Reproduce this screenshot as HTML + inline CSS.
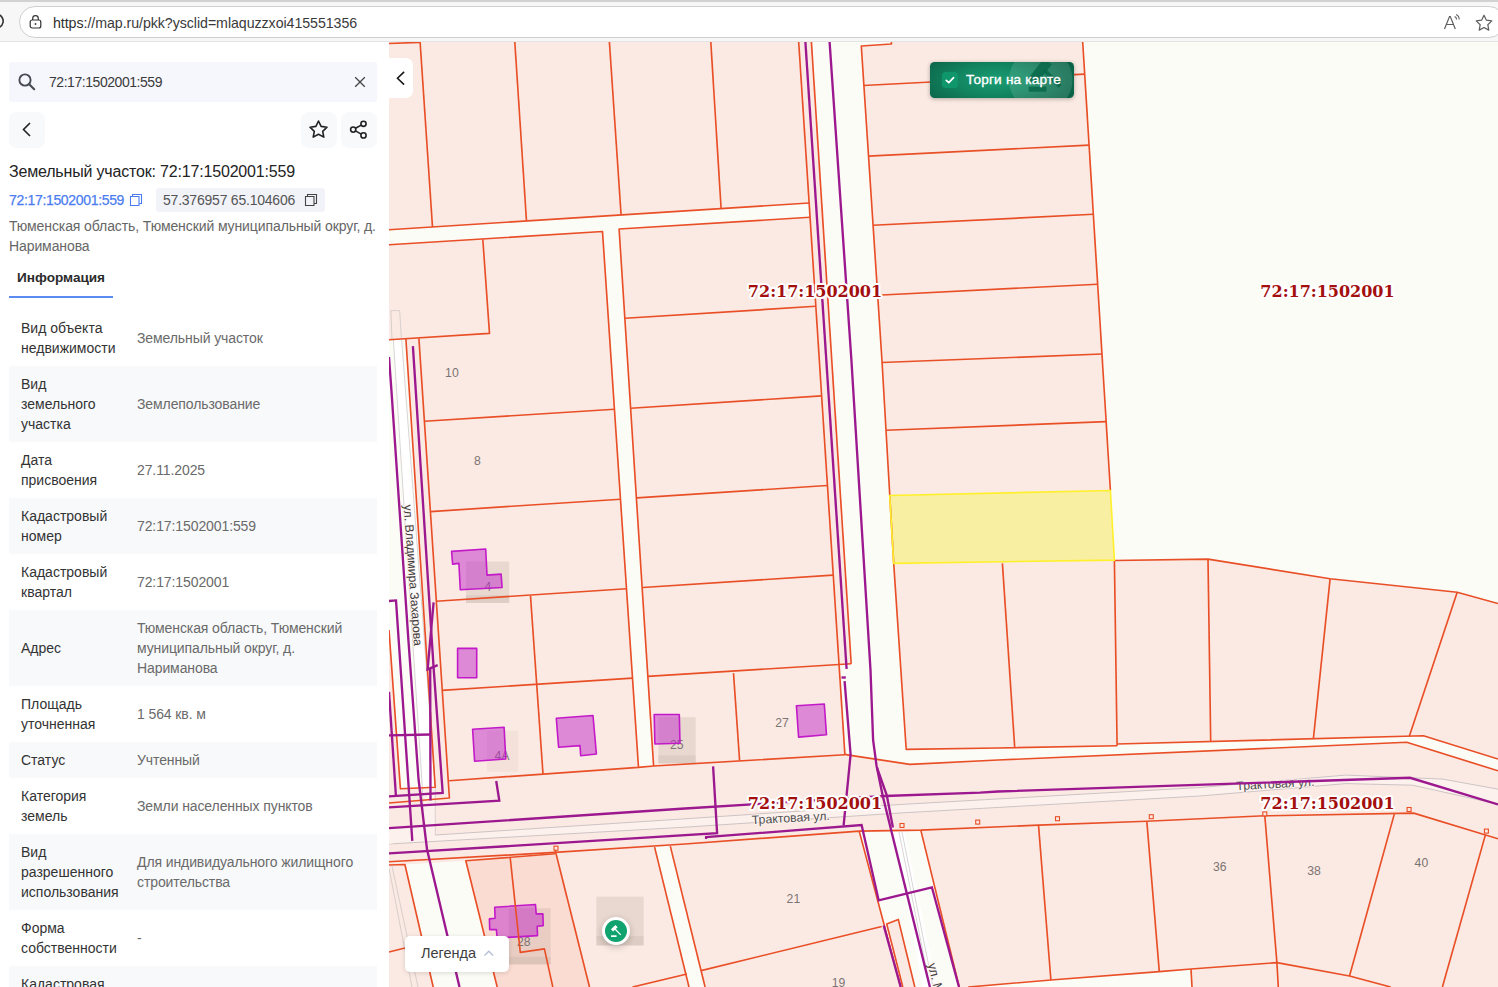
<!DOCTYPE html>
<html lang="ru">
<head>
<meta charset="utf-8">
<title>map.ru — 72:17:1502001:559</title>
<style>
*{box-sizing:border-box;margin:0;padding:0}
html,body{width:1498px;height:987px;overflow:hidden;background:#fff;font-family:"Liberation Sans",sans-serif;color:#333}
#chrome{position:absolute;left:0;top:0;width:1498px;height:42px;background:#f7f7f7;border-top:2px solid #d2d2d2;border-bottom:1px solid #e4e4e4;z-index:30}
#addr{position:absolute;left:19px;top:4px;width:1486px;height:32px;border:1px solid #cfcfcf;border-radius:16px;background:#fff}
#url{position:absolute;left:33px;top:7.5px;font-size:14.2px;line-height:17px;color:#2f2f2f;white-space:nowrap;letter-spacing:-0.05px}
#url span{color:#3a3a3a}
#panel{position:absolute;left:0;top:42px;width:389px;height:945px;background:#fff;z-index:20;overflow:hidden}
#map{position:absolute;left:0;top:0;width:1498px;height:987px;z-index:1}
.abs{position:absolute;white-space:nowrap}
#search{left:9px;top:20px;width:368px;height:40px;background:#f6f7fc;border-radius:2px}
#search .t{left:40px;top:10px;font-size:14px;line-height:20px;color:#3a3a3a;letter-spacing:-0.45px}
.ib{width:36px;height:36px;background:#f8f9fb;border-radius:8px}
#title{left:9px;top:119.8px;font-size:16px;line-height:20px;color:#232323;letter-spacing:-0.18px}
#lnk{left:9px;top:148px;font-size:14px;line-height:20px;color:#4c7df0;letter-spacing:-0.33px;-webkit-text-stroke:0.25px #4c7df0}
#chip{left:156px;top:146px;width:169px;height:24px;background:#f1f3f9;border-radius:3px}
#chip .t{left:7px;top:2px;font-size:14px;line-height:20px;color:#555;letter-spacing:-0.22px}
#adr{left:9px;top:174px;font-size:14px;line-height:20px;color:#666;letter-spacing:-0.1px;white-space:nowrap}
#tab{left:17px;top:226px;font-size:13.6px;line-height:20px;font-weight:700;color:#2b2b2b;letter-spacing:-0.02px}
#tabline{left:9px;top:254px;width:104px;height:2px;background:#5b8af0}
.row{position:absolute;left:9px;width:368px}
.row.g{background:#f8f9fb}
.row .l{position:absolute;left:12px;top:8px;font-size:14px;line-height:20px;color:#333;letter-spacing:0px;white-space:nowrap}
.row .v{position:absolute;left:128px;font-size:14px;line-height:20px;color:#6a6a6a;letter-spacing:-0.1px;white-space:nowrap}

#toggle{left:389px;top:57.7px;width:24px;height:40.5px;background:#fff;border-radius:0 7px 7px 0;z-index:25}
#torgi{left:930px;top:62px;width:144px;height:36px;border-radius:4.5px;background:radial-gradient(ellipse 62% 95% at 45% 50%,#1b9d72 0%,#128661 42%,#0e7051 75%,#0a6044 100%);box-shadow:0 1px 4px rgba(0,0,0,.3);z-index:25;overflow:hidden}
#torgi .t{left:36px;top:8px;font-size:13.6px;line-height:20px;color:#fff;letter-spacing:0.2px;-webkit-text-stroke:0.35px #fff}
#torgi .cb{left:12px;top:10px;width:15.5px;height:15.5px;border-radius:3.5px;background:#0f966a}
#legend{left:405px;top:936px;width:104px;height:35.6px;background:#fff;border-radius:5px;box-shadow:0 1px 5px rgba(0,0,0,.14);z-index:25}
#legend .t{left:16px;top:7px;font-size:14.5px;line-height:20px;color:#3e3e3e;letter-spacing:0px}
#marker{left:602px;top:916.8px;width:28.2px;height:28.2px;border-radius:50%;background:#fff;box-shadow:0 2px 7px rgba(0,0,0,.22);z-index:25}
#marker i{position:absolute;left:3px;top:3px;width:22.2px;height:22.2px;border-radius:50%;background:#10a36f}
</style>
</head>
<body>
<!--MAPSTART-->
<svg id="map" width="1498" height="987" viewBox="0 0 1498 987">
<rect x="389" y="42" width="1109" height="945" fill="#fbeae3"/>
<polygon points="389,229.7 809.1,203 809.9,217.3 619.1,229 653.6,766 638.5,767.4 602.5,231.5 389,244.7" fill="#fcfcf7"/>
<polygon points="811.4,42 861.3,42 861.3,45.4 882,361 893.7,563.4 906.2,749.4 998,748 1117.1,745.7 1117.1,744 1423.4,735.7 1498,759 1498,770.8 1406.7,742.3 998,760 909.8,764.4 850.6,755.4 844.6,754.4 839,664.4 851.2,663.7" fill="#fcfcf7"/>
<polygon points="861.3,42 891.4,42 891.4,44 861.3,46" fill="#fcfcf7"/>
<polygon points="1082.7,42 1498,42 1498,603.5 1457.2,592.2 1330.1,578.8 1208,559.1 1114.4,560.5 1110.4,490.5" fill="#fcfcf7"/>
<polygon points="389,339.7 405.9,339 435.2,787.2 400.4,788.8 389,630" fill="#fcfcf7"/>
<polygon points="404.9,864.5 465.8,860.8 497.2,987 433.2,987" fill="#fcfcf7"/>
<polygon points="654.6,847.1 670.3,846.1 705.1,987 689,987" fill="#fcfcf7"/>
<polygon points="859.2,831.1 920.8,830.1 959.2,987 900.7,987" fill="#fcfcf7"/>
<polygon points="968.2,987 1050.9,980 1159.3,971.6 1191,969 1192,987" fill="#fcfcf7"/>
<polygon points="393.4,340 401.7,340 424.3,640 435.2,787.2 422.4,788 412.6,640" fill="#fff"/>
<polygon points="893.7,832.1 904.8,832.1 936.9,987 922.8,987" fill="#fff"/>
<polygon points="435.3,835 685,818.8 900,804.5 1200,787.5 1345.8,775.1 1442.8,779.1 1498,789.2 1498,804.2 1412.7,785.2 1345.8,783.6 1200,796 900,813 685,827.2 389,844" fill="#fdf1ee"/>
<polyline points="435.3,835 685,818.8 900,804.5 1200,787.5 1345.8,775.1 1442.8,779.1 1498,789.2" fill="none" stroke="#cdc4c4" stroke-width="1"/>
<polyline points="389,844 685,827.2 900,813 1200,796 1345.8,783.6 1412.7,785.2 1498,804.2" fill="none" stroke="#cdc4c4" stroke-width="1"/>
<polygon points="389,829 423.5,827 422.4,788 435.2,787.2 435.3,835 389,844" fill="#fdf1ee"/>
<polyline points="393.4,340 412.6,640 422.4,788 423.5,827" fill="none" stroke="#c9c3c3" stroke-width="0.7"/>
<polyline points="435.2,787.2 435.3,835" fill="none" stroke="#c9c3c3" stroke-width="0.7"/>
<polyline points="401.7,340 424.3,640 435.2,787.2" fill="none" stroke="#c9c3c3" stroke-width="0.7"/>
<polyline points="390.9,310.6 399.7,310.6 401.4,338.7" fill="none" stroke="#c9c3c3" stroke-width="0.7"/>
<polyline points="390.9,310.6 392,339.4" fill="none" stroke="#c9c3c3" stroke-width="0.7"/>
<polyline points="389,868 412,987" fill="none" stroke="#c9c3c3" stroke-width="0.7"/>
<polyline points="392,866 418,987" fill="none" stroke="#c9c3c3" stroke-width="0.7"/>
<polyline points="899,832 930,987" fill="none" stroke="#c9c3c3" stroke-width="0.7"/>
<polyline points="902,832 933,987" fill="none" stroke="#c9c3c3" stroke-width="0.7"/>
<polygon points="886.7,923.9 898.3,919.4 914.8,987 902.8,987" fill="#fbeae3"/>
<polygon points="465.8,860.8 554.9,853.8 589.5,987 497.2,987" fill="#fbdcd3"/>
<polygon points="889.7,495.5 1110.4,490.5 1114.4,560.1 893.7,563.4" fill="#f9efa2"/>
<rect x="466" y="561.5" width="43.2" height="41.4" fill="#a49387" fill-opacity="0.2"/>
<rect x="466" y="595.2" width="43.2" height="7.7" fill="#a49387" fill-opacity="0.16"/>
<rect x="487" y="730.6" width="31.1" height="41.1" fill="#a49387" fill-opacity="0.09"/>
<rect x="658.3" y="717.2" width="37.4" height="46.2" fill="#a49387" fill-opacity="0.2"/>
<rect x="658.3" y="755.4" width="37.4" height="8" fill="#a49387" fill-opacity="0.16"/>
<rect x="508.8" y="908.2" width="41.9" height="56.2" fill="#a49387" fill-opacity="0.2"/>
<rect x="508.8" y="956.9" width="41.9" height="7.5" fill="#a49387" fill-opacity="0.16"/>
<rect x="596.3" y="896.6" width="47.4" height="48.9" fill="#a49387" fill-opacity="0.2"/>
<rect x="596.3" y="936" width="47.4" height="9.5" fill="#a49387" fill-opacity="0.16"/>
<text x="451.9" y="376.8" font-size="12.2" fill="#7b7474" text-anchor="middle" font-family="Liberation Sans, sans-serif">10</text>
<text x="477.3" y="464.8" font-size="12.2" fill="#7b7474" text-anchor="middle" font-family="Liberation Sans, sans-serif">8</text>
<text x="488" y="591.4" font-size="12.2" fill="#7b7474" text-anchor="middle" font-family="Liberation Sans, sans-serif">4</text>
<text x="502" y="760" font-size="12.2" fill="#7b7474" text-anchor="middle" font-family="Liberation Sans, sans-serif">4А</text>
<text x="676.7" y="749.4" font-size="12.2" fill="#7b7474" text-anchor="middle" font-family="Liberation Sans, sans-serif">25</text>
<text x="782" y="726.8" font-size="12.2" fill="#7b7474" text-anchor="middle" font-family="Liberation Sans, sans-serif">27</text>
<text x="523.8" y="945.6" font-size="12.2" fill="#7b7474" text-anchor="middle" font-family="Liberation Sans, sans-serif">28</text>
<text x="793.4" y="903.3" font-size="12.2" fill="#7b7474" text-anchor="middle" font-family="Liberation Sans, sans-serif">21</text>
<text x="838.5" y="986.5" font-size="12.2" fill="#7b7474" text-anchor="middle" font-family="Liberation Sans, sans-serif">19</text>
<text x="1219.7" y="870.5" font-size="12.2" fill="#7b7474" text-anchor="middle" font-family="Liberation Sans, sans-serif">36</text>
<text x="1314" y="875.2" font-size="12.2" fill="#7b7474" text-anchor="middle" font-family="Liberation Sans, sans-serif">38</text>
<text x="1421.4" y="866.5" font-size="12.2" fill="#7b7474" text-anchor="middle" font-family="Liberation Sans, sans-serif">40</text>
<polygon points="451.6,551.4 485.7,549 487,575.1 501.1,574.1 502.1,587.5 460.3,589.8 458.9,563.4 452.6,564.1" fill="#c028c7" fill-opacity="0.5" stroke="#c31ac9" stroke-width="1.6" stroke-linejoin="round"/>
<polygon points="457.6,648.4 476.7,648.4 476.7,677.7 457.6,677.7" fill="#c028c7" fill-opacity="0.5" stroke="#c31ac9" stroke-width="1.6" stroke-linejoin="round"/>
<polygon points="472.6,729.2 504.1,727.2 505.8,759 474.6,761.3" fill="#c028c7" fill-opacity="0.5" stroke="#c31ac9" stroke-width="1.6" stroke-linejoin="round"/>
<polygon points="556.3,718.2 593,715.5 596.4,754 580.7,755.7 580,745.6 558.6,747.3" fill="#c028c7" fill-opacity="0.5" stroke="#c31ac9" stroke-width="1.6" stroke-linejoin="round"/>
<polygon points="654.2,714.5 679.3,714.5 680,743.3 654.9,744" fill="#c028c7" fill-opacity="0.5" stroke="#c31ac9" stroke-width="1.6" stroke-linejoin="round"/>
<polygon points="796.4,705.8 824.3,704 826.5,734.7 798.6,737.1" fill="#c028c7" fill-opacity="0.5" stroke="#c31ac9" stroke-width="1.6" stroke-linejoin="round"/>
<polygon points="494.7,907.2 535.5,904.5 536.2,913.9 542.9,913.9 543.2,925.6 537.2,926.2 537.5,935.6 497.1,938 496.4,929.6 489.7,929.6 489.4,918.9 495.1,918.2" fill="#c028c7" fill-opacity="0.5" stroke="#c31ac9" stroke-width="1.6" stroke-linejoin="round"/>
<polyline points="389,43.5 420.1,42.4" fill="none" stroke="#e94f27" stroke-width="1.65" stroke-linejoin="round"/>
<polyline points="420.1,42 432.5,227" fill="none" stroke="#e94f27" stroke-width="1.65" stroke-linejoin="round"/>
<polyline points="514.8,42 526.5,221" fill="none" stroke="#e94f27" stroke-width="1.65" stroke-linejoin="round"/>
<polyline points="609.4,42 621.1,215" fill="none" stroke="#e94f27" stroke-width="1.65" stroke-linejoin="round"/>
<polyline points="710.8,42 721.1,208.6" fill="none" stroke="#e94f27" stroke-width="1.65" stroke-linejoin="round"/>
<polyline points="798.7,42 844.9,754.7" fill="none" stroke="#e94f27" stroke-width="1.65" stroke-linejoin="round"/>
<polyline points="389,229.7 809.1,203" fill="none" stroke="#e94f27" stroke-width="1.65" stroke-linejoin="round"/>
<polyline points="389,244.7 602.5,231.5 638.5,767.4" fill="none" stroke="#e94f27" stroke-width="1.65" stroke-linejoin="round"/>
<polyline points="809.9,217.3 619.1,229 653.6,766" fill="none" stroke="#e94f27" stroke-width="1.65" stroke-linejoin="round"/>
<polyline points="482.8,239.2 489.5,333.4 389,339.7" fill="none" stroke="#e94f27" stroke-width="1.65" stroke-linejoin="round"/>
<polyline points="418.9,338.4 449.4,798 389,803" fill="none" stroke="#e94f27" stroke-width="1.65" stroke-linejoin="round"/>
<polyline points="405.9,339 435.2,787.2 400.4,788.8 389,630" fill="none" stroke="#e94f27" stroke-width="1.65" stroke-linejoin="round"/>
<polyline points="424.5,421.3 614.4,409.2" fill="none" stroke="#e94f27" stroke-width="1.65" stroke-linejoin="round"/>
<polyline points="430.5,511.6 620.5,499.2" fill="none" stroke="#e94f27" stroke-width="1.65" stroke-linejoin="round"/>
<polyline points="436.2,601.2 626.5,588.8" fill="none" stroke="#e94f27" stroke-width="1.65" stroke-linejoin="round"/>
<polyline points="441.9,690.4 632.5,678.1" fill="none" stroke="#e94f27" stroke-width="1.65" stroke-linejoin="round"/>
<polyline points="449.2,780.7 638.5,767.4 653.6,766 844.9,754.7" fill="none" stroke="#e94f27" stroke-width="1.65" stroke-linejoin="round"/>
<polyline points="530.5,595.9 543,774" fill="none" stroke="#e94f27" stroke-width="1.65" stroke-linejoin="round"/>
<polyline points="625.2,318.3 815.6,306.3" fill="none" stroke="#e94f27" stroke-width="1.65" stroke-linejoin="round"/>
<polyline points="630.8,408.2 821.4,395.9" fill="none" stroke="#e94f27" stroke-width="1.65" stroke-linejoin="round"/>
<polyline points="636.9,497.9 827.2,485.5" fill="none" stroke="#e94f27" stroke-width="1.65" stroke-linejoin="round"/>
<polyline points="642.9,587.5 833,575.1" fill="none" stroke="#e94f27" stroke-width="1.65" stroke-linejoin="round"/>
<polyline points="647.6,676.4 851.2,663.7" fill="none" stroke="#e94f27" stroke-width="1.65" stroke-linejoin="round"/>
<polyline points="733.5,673.1 739.6,760.6" fill="none" stroke="#e94f27" stroke-width="1.65" stroke-linejoin="round"/>
<polyline points="811.4,42 851.2,663.7" fill="none" stroke="#e94f27" stroke-width="1.65" stroke-linejoin="round"/>
<polyline points="891.4,42 891.4,44 861.3,46 882,361 893.7,563.4 906.2,749.4 998,748 1117.1,745.7" fill="none" stroke="#e94f27" stroke-width="1.65" stroke-linejoin="round"/>
<polyline points="1082.7,42 1110.4,490.5" fill="none" stroke="#e94f27" stroke-width="1.65" stroke-linejoin="round"/>
<polyline points="863.6,85.5 1084.7,74.1" fill="none" stroke="#e94f27" stroke-width="1.65" stroke-linejoin="round"/>
<polyline points="868.3,156.1 1089,145.1" fill="none" stroke="#e94f27" stroke-width="1.65" stroke-linejoin="round"/>
<polyline points="873,225.3 1093.3,214.3" fill="none" stroke="#e94f27" stroke-width="1.65" stroke-linejoin="round"/>
<polyline points="877.3,295.2 1097.7,284.2" fill="none" stroke="#e94f27" stroke-width="1.65" stroke-linejoin="round"/>
<polyline points="881.7,362.5 1102,354" fill="none" stroke="#e94f27" stroke-width="1.65" stroke-linejoin="round"/>
<polyline points="886,430.3 1106.1,421.6" fill="none" stroke="#e94f27" stroke-width="1.65" stroke-linejoin="round"/>
<polyline points="1002.4,563.4 1014.7,747.4" fill="none" stroke="#e94f27" stroke-width="1.65" stroke-linejoin="round"/>
<polyline points="1114.4,560.5 1117.1,745.7" fill="none" stroke="#e94f27" stroke-width="1.65" stroke-linejoin="round"/>
<polyline points="1114.4,560.5 1208,559.1 1330.1,578.8 1457.2,592.2 1498,603.5" fill="none" stroke="#e94f27" stroke-width="1.65" stroke-linejoin="round"/>
<polyline points="1117.1,744 1423.4,735.7 1498,759" fill="none" stroke="#e94f27" stroke-width="1.65" stroke-linejoin="round"/>
<polyline points="1208,559.1 1210.7,741.5" fill="none" stroke="#e94f27" stroke-width="1.65" stroke-linejoin="round"/>
<polyline points="1330.1,578.8 1313.4,738.7" fill="none" stroke="#e94f27" stroke-width="1.65" stroke-linejoin="round"/>
<polyline points="1457.2,592.2 1409.4,736" fill="none" stroke="#e94f27" stroke-width="1.65" stroke-linejoin="round"/>
<polyline points="844.6,754.4 850.6,755.4 909.8,764.4 998,760 1406.7,742.3 1498,770.8" fill="none" stroke="#e94f27" stroke-width="1.65" stroke-linejoin="round"/>
<polyline points="859.2,831.1 920.8,830.1 1038.5,825.1 1146.8,821.2 1264.8,815.8 1413.7,813.1 1498,838.8" fill="none" stroke="#e94f27" stroke-width="1.65" stroke-linejoin="round"/>
<polyline points="920.8,830.1 959.2,987" fill="none" stroke="#e94f27" stroke-width="1.65" stroke-linejoin="round"/>
<polyline points="1038.5,825.1 1050.9,980" fill="none" stroke="#e94f27" stroke-width="1.65" stroke-linejoin="round"/>
<polyline points="1146.8,821.1 1159.3,971.6" fill="none" stroke="#e94f27" stroke-width="1.65" stroke-linejoin="round"/>
<polyline points="1264.8,815.6 1276.9,962.6 1278.3,987" fill="none" stroke="#e94f27" stroke-width="1.65" stroke-linejoin="round"/>
<polyline points="1394.3,814.1 1349.5,976" fill="none" stroke="#e94f27" stroke-width="1.65" stroke-linejoin="round"/>
<polyline points="1485.4,834.9 1442.4,987" fill="none" stroke="#e94f27" stroke-width="1.65" stroke-linejoin="round"/>
<polyline points="968.2,987 1050.9,980 1159.3,971.6 1191,969 1276.9,962.6 1349.5,976 1390.7,987" fill="none" stroke="#e94f27" stroke-width="1.65" stroke-linejoin="round"/>
<polyline points="1191,969 1192,987" fill="none" stroke="#e94f27" stroke-width="1.65" stroke-linejoin="round"/>
<polyline points="389,861.8 554.9,852.4 685,844 859.2,831.1 900.7,987" fill="none" stroke="#e94f27" stroke-width="1.65" stroke-linejoin="round"/>
<polyline points="670.3,846.1 705.1,987" fill="none" stroke="#e94f27" stroke-width="1.65" stroke-linejoin="round"/>
<polyline points="654.6,847.1 689,987" fill="none" stroke="#e94f27" stroke-width="1.65" stroke-linejoin="round"/>
<polyline points="701.1,970.6 881.7,926.5" fill="none" stroke="#e94f27" stroke-width="1.65" stroke-linejoin="round"/>
<polyline points="632.5,987 687,974" fill="none" stroke="#e94f27" stroke-width="1.65" stroke-linejoin="round"/>
<polyline points="389,865 404.9,864.5 433.2,987" fill="none" stroke="#e94f27" stroke-width="1.65" stroke-linejoin="round"/>
<polyline points="497.2,987 465.8,860.8 554.9,853.8" fill="none" stroke="#e94f27" stroke-width="1.65" stroke-linejoin="round"/>
<polyline points="554.9,849.2 589.5,987" fill="none" stroke="#e94f27" stroke-width="1.65" stroke-linejoin="round"/>
<polyline points="510.2,857.6 520.3,952.4 544.4,948.9 552.8,987" fill="none" stroke="#e94f27" stroke-width="1.65" stroke-linejoin="round"/>
<polyline points="389,952 404.9,948" fill="none" stroke="#e94f27" stroke-width="1.65" stroke-linejoin="round"/>
<polyline points="902.8,987 886.7,923.9 898.3,919.4 914.8,987" fill="none" stroke="#e94f27" stroke-width="1.65" stroke-linejoin="round"/>
<rect x="900" y="823.5" width="4" height="4" fill="#fbeae3" stroke="#e94f27" stroke-width="1.1"/>
<rect x="975.7" y="820.1" width="4" height="4" fill="#fbeae3" stroke="#e94f27" stroke-width="1.1"/>
<rect x="1055.5" y="816.7" width="4" height="4" fill="#fbeae3" stroke="#e94f27" stroke-width="1.1"/>
<rect x="1149.3" y="814.7" width="4" height="4" fill="#fbeae3" stroke="#e94f27" stroke-width="1.1"/>
<rect x="1262.8" y="811.9" width="4" height="4" fill="#fbeae3" stroke="#e94f27" stroke-width="1.1"/>
<rect x="1407.1" y="807.5" width="4" height="4" fill="#fbeae3" stroke="#e94f27" stroke-width="1.1"/>
<rect x="1484.4" y="829.1" width="4" height="4" fill="#fbeae3" stroke="#e94f27" stroke-width="1.1"/>
<rect x="554" y="846.2" width="4" height="4" fill="#fbeae3" stroke="#e94f27" stroke-width="1.1"/>
<polygon points="889.7,495.5 1110.4,490.5 1114.4,560.1 893.7,563.4" fill="none" stroke="#fff02c" stroke-width="1.6"/>
<text transform="translate(408.8,575.5) rotate(85.8)" font-size="12.2" fill="#3c3c3c" text-anchor="middle" font-family="Liberation Sans, sans-serif" stroke="#fdf3f0" stroke-width="2" paint-order="stroke" stroke-linejoin="round">ул. Владимира Захарова</text>
<text transform="translate(791,822) rotate(-3.2)" font-size="12.3" fill="#4d4d4d" text-anchor="middle" font-family="Liberation Sans, sans-serif" stroke="#fdf3f0" stroke-width="2" paint-order="stroke" stroke-linejoin="round">Трактовая ул.</text>
<text transform="translate(1275.6,788) rotate(-3.2)" font-size="12.3" fill="#4d4d4d" text-anchor="middle" font-family="Liberation Sans, sans-serif" stroke="#fdf3f0" stroke-width="2" paint-order="stroke" stroke-linejoin="round">Трактовая ул.</text>
<text transform="translate(934,989.4) rotate(76)" font-size="12.6" fill="#3c3c3c" text-anchor="middle" font-family="Liberation Sans, sans-serif" stroke="#fdf3f0" stroke-width="2" paint-order="stroke" stroke-linejoin="round">ул. Мира</text>
<polyline points="389,828.2 685,808.5 884.7,796 980,792.6 998,791.5 1410,777.8 1498,804.5" fill="none" stroke="#9c188f" stroke-width="2.35" stroke-linejoin="miter"/>
<polyline points="389,853.4 717.1,833.2 713.1,766.4" fill="none" stroke="#9c188f" stroke-width="2.35" stroke-linejoin="miter"/>
<polyline points="706.1,839 706.1,837.2 861.6,825.1 878.7,900.4 931.9,887.3 959,987" fill="none" stroke="#9c188f" stroke-width="2.35" stroke-linejoin="miter"/>
<polyline points="805.4,42 846.6,669" fill="none" stroke="#9c188f" stroke-width="2.35" stroke-linejoin="miter"/>
<polyline points="841.5,677.5 845.8,677.5" fill="none" stroke="#9c188f" stroke-width="2.35" stroke-linejoin="miter"/>
<polyline points="844.6,681.1 850.6,754.4 843.6,825.6" fill="none" stroke="#9c188f" stroke-width="2.35" stroke-linejoin="miter"/>
<polyline points="829.6,42 851.4,360 870.5,670 873.1,740 876.5,765.5 882.6,795.3 891.1,830 906.8,893.4 929.9,987" fill="none" stroke="#9c188f" stroke-width="2.35" stroke-linejoin="miter"/>
<polyline points="877.1,768 886.8,795.3 892.9,827.5" fill="none" stroke="#9c188f" stroke-width="2.35" stroke-linejoin="miter"/>
<polyline points="883.7,925.5 900.7,987" fill="none" stroke="#9c188f" stroke-width="2.35" stroke-linejoin="miter"/>
<polyline points="389,357 391.4,390 408.4,640 418.6,780 427,849.2 459.5,987" fill="none" stroke="#9c188f" stroke-width="2.35" stroke-linejoin="miter"/>
<polyline points="389,601 396,600.4 412.3,840.8" fill="none" stroke="#9c188f" stroke-width="2.35" stroke-linejoin="miter"/>
<polyline points="389,691.8 395.9,795.5" fill="none" stroke="#9c188f" stroke-width="2.35" stroke-linejoin="miter"/>
<polyline points="412.9,346.2 433.6,667.7 442.7,793 389,796.4" fill="none" stroke="#9c188f" stroke-width="2.35" stroke-linejoin="miter"/>
<polyline points="433.6,602.3 427.6,669.3 437.7,665.1" fill="none" stroke="#9c188f" stroke-width="2.35" stroke-linejoin="miter"/>
<polyline points="430.2,668.4 430.5,800.5" fill="none" stroke="#9c188f" stroke-width="2.35" stroke-linejoin="miter"/>
<polyline points="389,735.3 430.2,734.5" fill="none" stroke="#9c188f" stroke-width="2.35" stroke-linejoin="miter"/>
<polyline points="389,807.3 499.3,800.6 496.2,781" fill="none" stroke="#9c188f" stroke-width="2.35" stroke-linejoin="miter"/>
<text x="815" y="296.5" font-size="16" font-weight="700" fill="#a30f0f" text-anchor="middle" font-family="DejaVu Serif, Liberation Serif, serif" stroke="#fff" stroke-opacity="1" stroke-width="4.2" paint-order="stroke" stroke-linejoin="round" letter-spacing="0">72:17:1502001</text>
<text x="1327.5" y="296.5" font-size="16" font-weight="700" fill="#a30f0f" text-anchor="middle" font-family="DejaVu Serif, Liberation Serif, serif" stroke="#fff" stroke-opacity="1" stroke-width="4.2" paint-order="stroke" stroke-linejoin="round" letter-spacing="0">72:17:1502001</text>
<text x="815" y="808.7" font-size="16" font-weight="700" fill="#a30f0f" text-anchor="middle" font-family="DejaVu Serif, Liberation Serif, serif" stroke="#fff" stroke-opacity="1" stroke-width="4.2" paint-order="stroke" stroke-linejoin="round" letter-spacing="0">72:17:1502001</text>
<text x="1327.5" y="808.7" font-size="16" font-weight="700" fill="#a30f0f" text-anchor="middle" font-family="DejaVu Serif, Liberation Serif, serif" stroke="#fff" stroke-opacity="1" stroke-width="4.2" paint-order="stroke" stroke-linejoin="round" letter-spacing="0">72:17:1502001</text>
</svg>
<!--MAPEND-->
<div id="toggle" class="abs"><svg width="24" height="40.5" viewBox="0 0 24 40.5"><path d="M15.1 13.9L8.5 20.3l6.6 6.3" fill="none" stroke="#1a1a1a" stroke-width="1.6"/></svg></div>
<div id="torgi" class="abs">
  <svg class="abs" style="left:0;top:0" width="144" height="36" viewBox="0 0 144 36"><circle cx="110.7" cy="17.8" r="31.8" fill="#fff" fill-opacity="0.12"/><g fill="#09674a" fill-opacity="0.85"><rect x="-13" y="-5" width="26" height="10" transform="translate(110 9.5) rotate(-52)"/><path d="M112.5 9.2l3.2-2.6 16 16.6-3.2 2.6z"/><rect x="98.8" y="24.6" width="17.6" height="5.1"/></g></svg>
  <div class="abs cb"><svg width="16" height="16" viewBox="0 0 16 16"><path d="M4.3 8.3l2.5 2.4 4.8-5" fill="none" stroke="#fff" stroke-width="1.7" stroke-linecap="round" stroke-linejoin="round"/></svg></div>
  <div class="abs t">Торги на карте</div>
</div>
<div id="legend" class="abs"><div class="abs t">Легенда</div><svg class="abs" style="left:77px;top:11px" width="14" height="12" viewBox="0 0 14 12"><path d="M2.5 8.5l4.3-4.2 4.3 4.2" fill="none" stroke="#b5bfd6" stroke-width="1.4"/></svg></div>
<div id="marker" class="abs"><i></i><svg class="abs" style="left:3.1px;top:3.1px" width="22" height="22" viewBox="0 0 22 22"><g fill="#fff"><rect x="-3.1" y="-1.6" width="6.2" height="3.2" transform="translate(9.3 8.3) rotate(-43)"/><path d="M9.6 9.5l0.9-0.9 5.7 5.8-0.9 0.9z"/><rect x="6" y="15.2" width="5.6" height="1.9" rx="0.3"/></g></svg></div>
<div id="chrome">
  <svg class="abs" style="left:-4px;top:9px" width="8" height="22" viewBox="0 0 8 22"><path d="M-4 4.5a7 7 0 1 1 -2 9" fill="none" stroke="#333" stroke-width="1.6"/><path d="M0.5 2.5v5.5h-5" fill="none" stroke="#333" stroke-width="1.6"/></svg>
  <div id="addr">
    <svg class="abs" style="left:8px;top:7px" width="16" height="16" viewBox="0 0 16 16"><rect x="2.2" y="6" width="10.6" height="8" rx="2" fill="none" stroke="#333" stroke-width="1.2"/><path d="M4.7 6V4.4a2.8 2.8 0 0 1 5.6 0V6" fill="none" stroke="#333" stroke-width="1.2"/><circle cx="7.5" cy="10" r="0.9" fill="#333"/></svg>
    <div id="url">https:<span>//map.ru/pkk?ysclid=mlaquzzxoi415551356</span></div>
    <svg class="abs" style="left:1422px;top:6px" width="20" height="20" viewBox="0 0 20 20"><path d="M2.5 16L7.5 3.6h0.8L13.3 16M4.4 11.5h7" fill="none" stroke="#5e5e5e" stroke-width="1.2"/><path d="M12.6 3.6c1.3 0.5 2 1.6 2 3M14 1.6c2.2 0.9 3.2 2.9 3.2 5" fill="none" stroke="#5e5e5e" stroke-width="1.1"/></svg>
    <svg class="abs" style="left:1454px;top:6px" width="20" height="20" viewBox="0 0 20 20"><path d="M10 2.2l2.4 5 5.4 0.7-4 3.8 1 5.4L10 14.5l-4.8 2.6 1-5.4-4-3.8 5.4-0.7z" fill="none" stroke="#5e5e5e" stroke-width="1.2" stroke-linejoin="round"/></svg>
  </div>
</div>
<div id="panel">
  <div id="search" class="abs">
    <svg class="abs" style="left:8px;top:10px" width="20" height="20" viewBox="0 0 20 20"><circle cx="8" cy="8" r="5.6" fill="none" stroke="#464b54" stroke-width="1.9"/><path d="M12.2 12.2L17.2 17.2" stroke="#464b54" stroke-width="2.1" stroke-linecap="round"/></svg>
    <div class="abs t">72:17:1502001:559</div>
    <svg class="abs" style="left:345px;top:14px" width="12" height="12" viewBox="0 0 12 12"><path d="M1.2 1.2L10.8 10.8M10.8 1.2L1.2 10.8" stroke="#444" stroke-width="1.3"/></svg>
  </div>
  <div class="abs ib" style="left:9px;top:70px"><svg width="35" height="35" viewBox="0 0 35 35"><path d="M21 11l-6.5 6.5L21 24" fill="none" stroke="#222" stroke-width="1.6"/></svg></div>
  <div class="abs ib" style="left:301px;top:70px"><svg width="35" height="35" viewBox="0 0 35 35"><path d="M17.5 9l2.6 5.4 5.9 0.8-4.3 4.1 1.1 5.8-5.3-2.9-5.3 2.9 1.1-5.8-4.3-4.1 5.9-0.8z" fill="none" stroke="#222" stroke-width="1.6" stroke-linejoin="round"/></svg></div>
  <div class="abs ib" style="left:341px;top:70px"><svg width="35" height="35" viewBox="0 0 35 35"><g fill="none" stroke="#222" stroke-width="1.6"><circle cx="22.5" cy="11.8" r="2.6"/><circle cx="12.2" cy="17.6" r="2.6"/><circle cx="22.5" cy="23.4" r="2.6"/><path d="M14.5 16.3l5.7-3.2M14.5 18.9l5.7 3.2"/></g></svg></div>
  <div id="title" class="abs">Земельный участок: 72:17:1502001:559</div>
  <div id="lnk" class="abs">72:17:1502001:559</div>
  <svg class="abs" style="left:129px;top:151px" width="14" height="14" viewBox="0 0 14 14"><path d="M1.5 3.5h8.5v9h-8.5z M3.5 3.5v-2h9v9h-2.5" fill="none" stroke="#4c7df0" stroke-width="1.1"/></svg>
  <div id="chip" class="abs"><div class="abs t">57.376957 65.104606</div>
    <svg class="abs" style="left:148px;top:5px" width="14" height="14" viewBox="0 0 14 14"><path d="M1.5 3.5h8.5v9h-8.5z M3.5 3.5v-2h9v9h-2.5" fill="none" stroke="#444" stroke-width="1.1"/></svg></div>
  <div id="adr" class="abs">Тюменская область, Тюменский муниципальный округ, д.<br>Нариманова</div>
  <div id="tab" class="abs">Информация</div>
  <div id="tabline" class="abs"></div>
  <div class="row" style="top:268px;height:56px"><div class="l" style="top:8px">Вид объекта<br>недвижимости</div><div class="v" style="top:18px">Земельный участок</div></div>
  <div class="row g" style="top:324px;height:76px"><div class="l" style="top:8px">Вид<br>земельного<br>участка</div><div class="v" style="top:28px">Землепользование</div></div>
  <div class="row" style="top:400px;height:56px"><div class="l" style="top:8px">Дата<br>присвоения</div><div class="v" style="top:18px">27.11.2025</div></div>
  <div class="row g" style="top:456px;height:56px"><div class="l" style="top:8px">Кадастровый<br>номер</div><div class="v" style="top:18px">72:17:1502001:559</div></div>
  <div class="row" style="top:512px;height:56px"><div class="l" style="top:8px">Кадастровый<br>квартал</div><div class="v" style="top:18px">72:17:1502001</div></div>
  <div class="row g" style="top:568px;height:76px"><div class="l" style="top:28px">Адрес</div><div class="v" style="top:8px">Тюменская область, Тюменский<br>муниципальный округ, д.<br>Нариманова</div></div>
  <div class="row" style="top:644px;height:56px"><div class="l" style="top:8px">Площадь<br>уточненная</div><div class="v" style="top:18px">1 564 кв. м</div></div>
  <div class="row g" style="top:700px;height:36px"><div class="l" style="top:8px">Статус</div><div class="v" style="top:8px">Учтенный</div></div>
  <div class="row" style="top:736px;height:56px"><div class="l" style="top:8px">Категория<br>земель</div><div class="v" style="top:18px">Земли населенных пунктов</div></div>
  <div class="row g" style="top:792px;height:76px"><div class="l" style="top:8px">Вид<br>разрешенного<br>использования</div><div class="v" style="top:18px">Для индивидуального жилищного<br>строительства</div></div>
  <div class="row" style="top:868px;height:56px"><div class="l" style="top:8px">Форма<br>собственности</div><div class="v" style="top:18px">-</div></div>
  <div class="row g" style="top:924px;height:56px"><div class="l" style="top:8px">Кадастровая<br>стоимость</div><div class="v" style="top:18px">-</div></div>
</div>
</body>
</html>
